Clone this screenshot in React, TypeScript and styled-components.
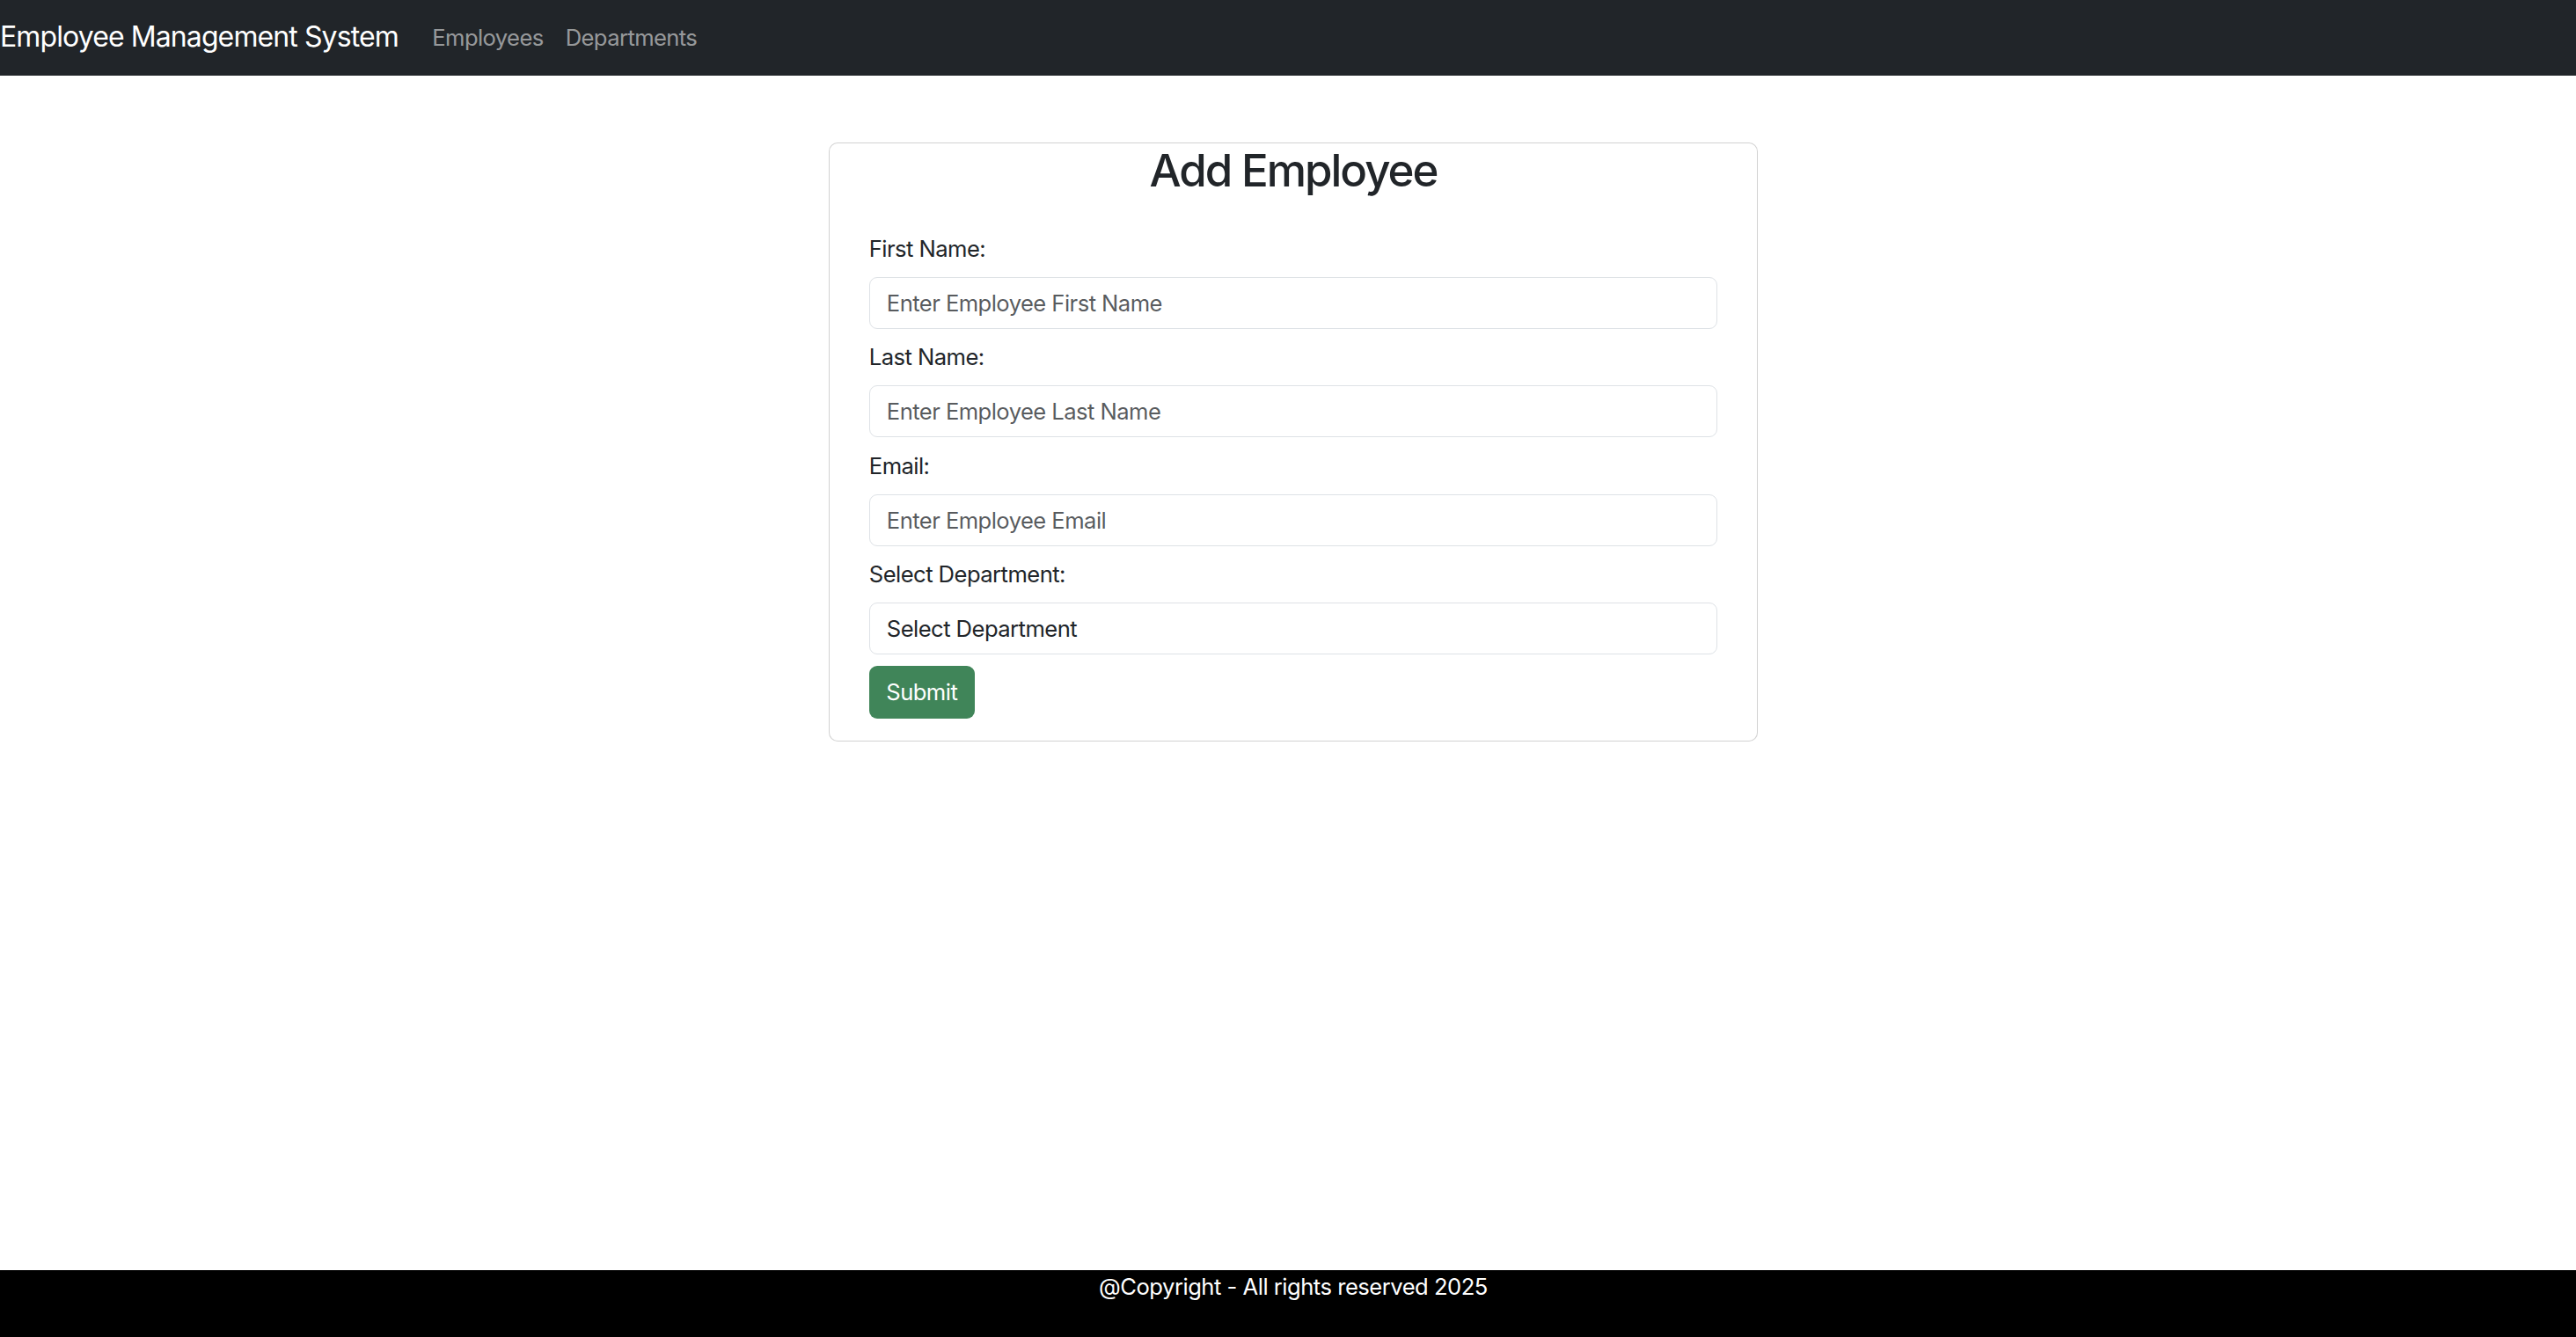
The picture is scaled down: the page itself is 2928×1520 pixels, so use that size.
import React from "react";
import styled, { createGlobalStyle } from "styled-components";

const GlobalStyle = createGlobalStyle`
  html, body {
    margin: 0;
    padding: 0;
    background: #ffffff;
  }
  body {
    font-family: Inter, "Noto Sans", "Liberation Sans", sans-serif;
    color: #212529;
    -webkit-font-smoothing: antialiased;
  }
  * { box-sizing: border-box; }
`;

const Page = styled.div`
  min-height: 100vh;
  display: flex;
  flex-direction: column;
`;

const NavBar = styled.header`
  height: 86px;
  background: #212529;
  display: flex;
  align-items: center;
  padding-bottom: 2px;
`;

const Brand = styled.a`
  font-size: 32px;
  line-height: 1.5;
  color: #ffffff;
  text-decoration: none;
  margin-right: 26px;
  letter-spacing: -0.9px;
`;

const NavList = styled.nav`
  display: flex;
  align-items: center;
  padding-top: 3px;
`;

const NavLink = styled.a`
  font-size: 25.6px;
  line-height: 1.5;
  color: rgba(255, 255, 255, 0.55);
  text-decoration: none;
  padding: 0 12.5px;
  letter-spacing: -0.6px;
`;

const Main = styled.main`
  flex: 1;
  display: flex;
  justify-content: center;
  align-items: flex-start;
  padding: 76px 0 0 12px;
`;

const Card = styled.section`
  width: 1056px;
  border: 1px solid rgba(0, 0, 0, 0.176);
  border-radius: 10px;
  background: #ffffff;
`;

const Title = styled.h2`
  margin: 0 0 12.8px;
  font-size: 51px;
  font-weight: 500;
  line-height: 1.2;
  text-align: center;
  color: #212529;
  letter-spacing: -2px;
`;

const CardBody = styled.div`
  padding: 25.6px 44.8px;
`;

const Form = styled.form`
  display: flex;
  flex-direction: column;
`;

const Group = styled.div`
  display: flex;
  flex-direction: column;
  margin-bottom: 12.5px;
`;

const Label = styled.label`
  font-size: 25.6px;
  line-height: 39px;
  margin-bottom: 13px;
  color: #212529;
  letter-spacing: -0.55px;
`;

const Input = styled.input`
  height: 59px;
  width: 100%;
  padding: 0 19px;
  font-family: inherit;
  font-size: 25.6px;
  color: #212529;
  border: 1px solid #dee2e6;
  border-radius: 9px;
  background: #ffffff;
  outline: none;
  letter-spacing: -0.55px;
  &::placeholder {
    color: rgba(33, 37, 41, 0.75);
  }
`;

const Select = styled.select`
  height: 59px;
  width: 100%;
  padding: 0 19px;
  font-family: inherit;
  font-size: 25.6px;
  color: #212529;
  border: 1px solid #dee2e6;
  border-radius: 9px;
  background: #ffffff;
  outline: none;
  appearance: none;
  -webkit-appearance: none;
  letter-spacing: -0.55px;
`;

const SubmitButton = styled.button`
  align-self: flex-start;
  height: 60px;
  padding: 0 19.5px;
  font-family: inherit;
  font-size: 25.6px;
  color: #ffffff;
  background: #408559;
  border: none;
  border-radius: 9px;
  letter-spacing: -0.55px;
  cursor: pointer;
`;

const Footer = styled.footer`
  height: 76px;
  padding-left: 12px;
  background: #000000;
  color: #ffffff;
  text-align: center;
  font-size: 25.6px;
  line-height: 1.5;
  letter-spacing: -0.5px;
`;

const fields = [
  { id: "firstName", label: "First Name:", placeholder: "Enter Employee First Name" },
  { id: "lastName", label: "Last Name:", placeholder: "Enter Employee Last Name" },
  { id: "email", label: "Email:", placeholder: "Enter Employee Email" },
];

export default function App() {
  return (
    <Page>
      <GlobalStyle />
      <NavBar>
        <Brand href="#">Employee Management System</Brand>
        <NavList>
          <NavLink href="#">Employees</NavLink>
          <NavLink href="#">Departments</NavLink>
        </NavList>
      </NavBar>
      <Main>
        <Card>
          <Title>Add Employee</Title>
          <CardBody>
            <Form onSubmit={(e) => e.preventDefault()}>
              {fields.map((f) => (
                <Group key={f.id}>
                  <Label htmlFor={f.id}>{f.label}</Label>
                  <Input id={f.id} type="text" placeholder={f.placeholder} />
                </Group>
              ))}
              <Group>
                <Label htmlFor="department">Select Department:</Label>
                <Select id="department" defaultValue="">
                  <option value="">Select Department</option>
                </Select>
              </Group>
              <SubmitButton type="submit">Submit</SubmitButton>
            </Form>
          </CardBody>
        </Card>
      </Main>
      <Footer>@Copyright - All rights reserved 2025</Footer>
    </Page>
  );
}
